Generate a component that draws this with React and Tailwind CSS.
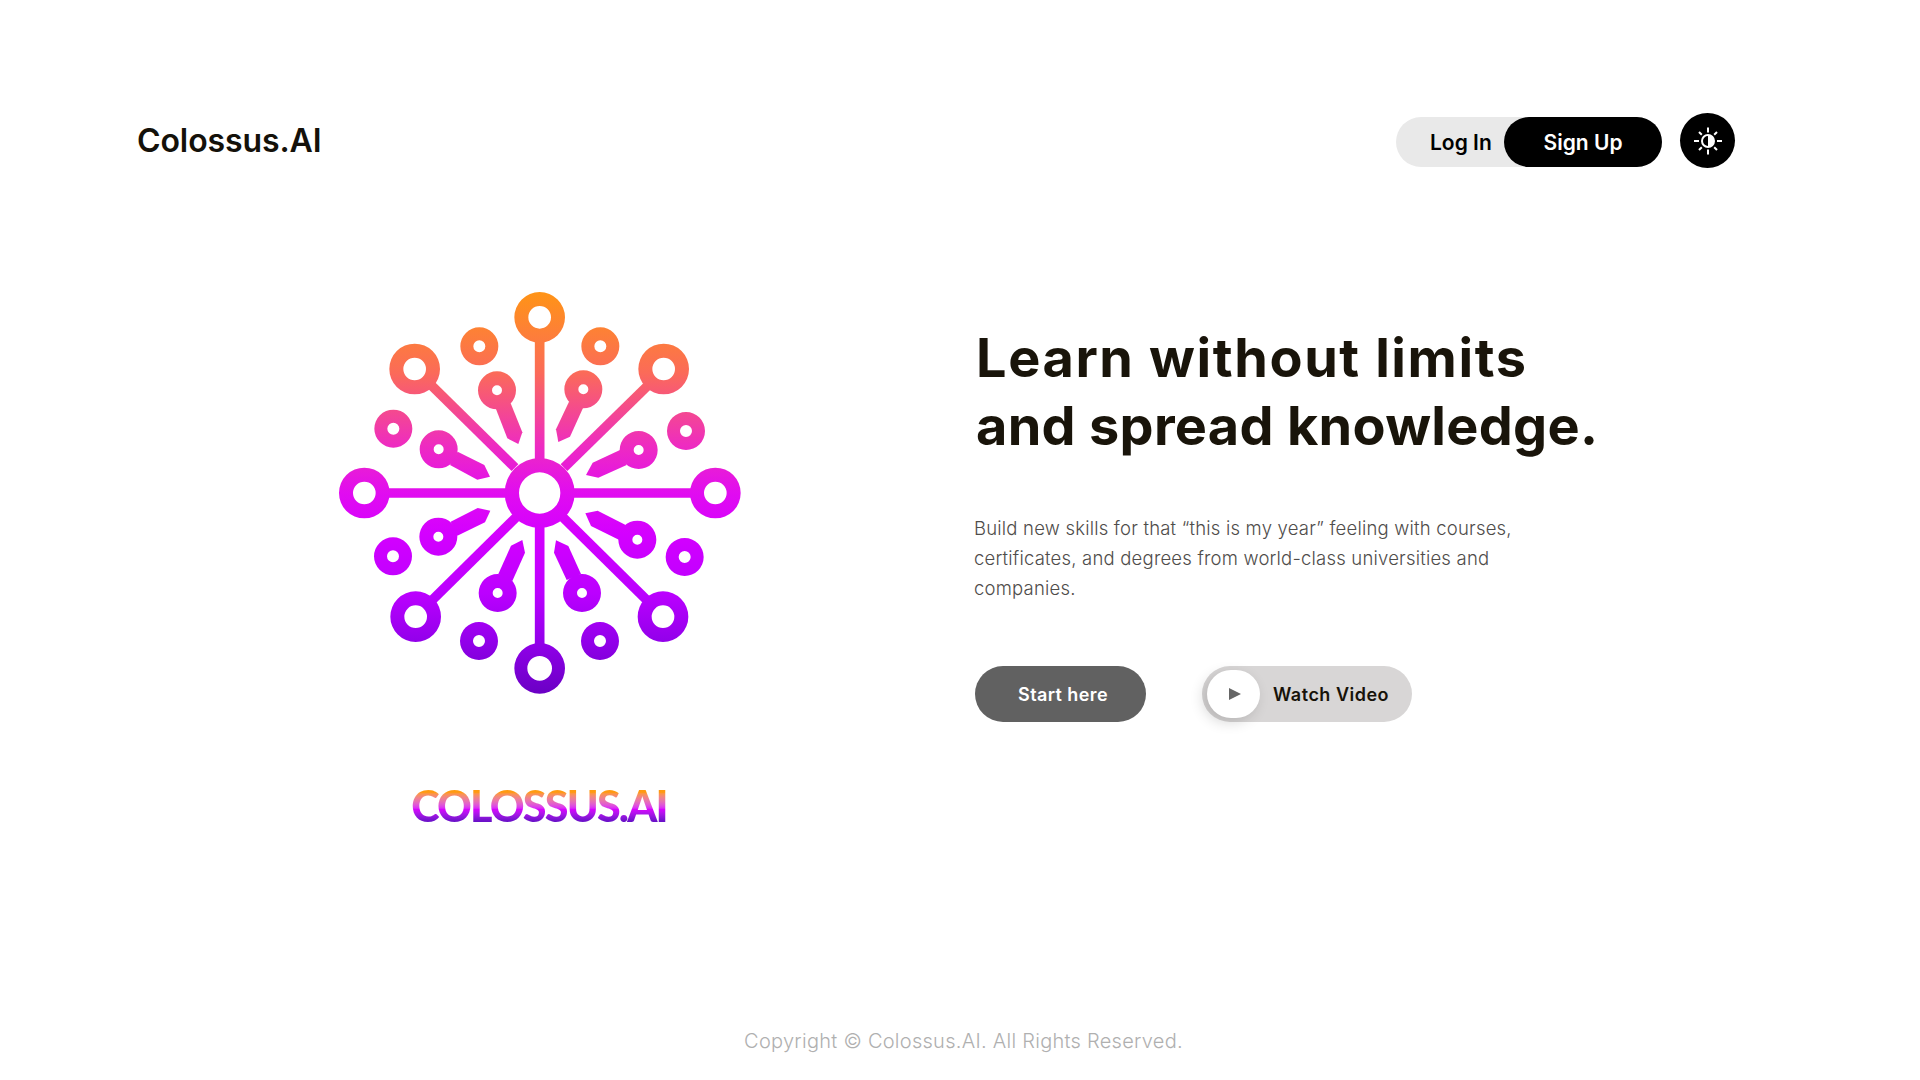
const bigRings = [
  [689, 142, 34], [689, 1195, 37], [163, 669, 34], [1216, 669, 34],
  [314, 297, 34], [1061, 297, 34], [317, 1040, 34], [1059, 1040, 34],
];

const smallRings = [
  [508, 229], [871, 229], [250, 476], [1128, 483],
  [249, 859], [1124, 861], [507, 1113], [870, 1113],
];

// head of each key plus the polygon of its tail
const keys = [
  { head: [561, 361], tail: '557,415 592,505 625,522 637,487 602,400' },
  { head: [820, 358], tail: '777,395 738,478 745,516 780,500 820,412' },
  { head: [386, 538], tail: '443,545 523,585 540,620 502,629 420,585' },
  { head: [986, 540], tail: '930,540 848,578 828,615 865,623 950,585' },
  { head: [385, 800], tail: '422,755 503,714 541,722 525,757 442,797' },
  { head: [982, 809], tail: '947,765 863,722 826,730 843,768 928,810' },
  { head: [563, 969], tail: '565,912 603,827 637,810 645,848 607,933' },
  { head: [816, 969], tail: '770,930 732,848 738,811 775,828 813,912' },
];

const spokes = [
  [689, 210, 689, 575], [689, 765, 689, 1125],
  [233, 669, 590, 669], [788, 669, 1147, 669],
  [365, 347, 615, 593], [1011, 349, 762, 593],
  [368, 989, 618, 742], [1009, 989, 759, 742],
];

// ring drawn as an even-odd path so the hole is really empty
function ring(cx, cy, outer, inner) {
  const circle = (r) => `M${cx - r} ${cy}a${r} ${r} 0 1 0 ${r * 2} 0a${r} ${r} 0 1 0 ${-r * 2} 0z`;
  return circle(outer) + circle(inner);
}

function Logo() {
  return (
    <svg viewBox="0 0 1350 1350" className="w-[450px] h-[450px] block">
      <defs>
        <linearGradient id="bloom" gradientUnits="userSpaceOnUse" x1="0" y1="66" x2="0" y2="1272">
          <stop offset="0" stopColor="#ff9416" />
          <stop offset="0.2" stopColor="#fb6b58" />
          <stop offset="0.38" stopColor="#ee2cc0" />
          <stop offset="0.5" stopColor="#e10cf0" />
          <stop offset="0.6" stopColor="#d400ff" />
          <stop offset="0.75" stopColor="#bb00ff" />
          <stop offset="0.87" stopColor="#9200ea" />
          <stop offset="1" stopColor="#6a00c4" />
        </linearGradient>
      </defs>
      {spokes.map(([x1, y1, x2, y2], i) => (
        <line key={i} x1={x1} y1={y1} x2={x2 + 0.01} y2={y2 + 0.01} stroke="url(#bloom)" strokeWidth="29" />
      ))}
      {keys.map((k, i) => (
        <polygon key={i} points={k.tail} fill="url(#bloom)" />
      ))}
      <path fillRule="evenodd" fill="url(#bloom)" d={ring(689, 669, 105, 62)} />
      {bigRings.map(([x, y, hole], i) => (
        <path key={i} fillRule="evenodd" fill="url(#bloom)" d={ring(x, y, 76, hole)} />
      ))}
      {smallRings.map(([x, y], i) => (
        <path key={i} fillRule="evenodd" fill="url(#bloom)" d={ring(x, y, 57, 18)} />
      ))}
      {keys.map((k, i) => (
        <path key={i} fillRule="evenodd" fill="url(#bloom)" d={ring(k.head[0], k.head[1], 57, 15)} />
      ))}
    </svg>
  );
}

function SunIcon() {
  return (
    <svg viewBox="0 0 30 30" className="w-[30px] h-[30px]" fill="none" stroke="#fff" strokeWidth="2">
      <circle cx="15" cy="15" r="6" />
      <path d="M15 9a6 6 0 0 1 0 12z" fill="#fff" stroke="none" />
      <path d="M15 1.5v5M15 23.5v5M1 15h5M24 15h5M6 6l2.8 2.8M21.2 21.2l2.8 2.8M6 24l2.8-2.8M21.2 8.8l2.8-2.8" />
    </svg>
  );
}

export default function App() {
  return (
    <div className="h-screen flex flex-col bg-white overflow-hidden font-['Inter',sans-serif]">
      {/* HEADER */}
      <header className="flex items-center justify-between pt-[113px] pl-[137px] pr-[185px]">
        <div className="font-semibold text-[32px] text-[#14110a] tracking-[-0.1px]">Colossus.AI</div>
        <div className="flex items-center gap-[18px]">
          <div className="flex items-center h-[50px] w-[266px] rounded-full bg-[#e9e9e9] mt-[3px]">
            <button className="w-[108px] pl-[34px] pt-[2px] text-left font-semibold text-[21px] text-black whitespace-nowrap">Log In</button>
            <button className="w-[158px] h-full pt-[2px] rounded-full bg-black text-white font-semibold text-[21px]">Sign Up</button>
          </div>
          <button className="w-[55px] h-[55px] rounded-full bg-black flex items-center justify-center">
            <SunIcon />
          </button>
        </div>
      </header>

      {/* HERO */}
      <main className="flex pl-[310px] mt-[102px]">
        <div className="flex flex-col items-center w-[450px]">
          <Logo />
          <div className="mt-[66px] ml-[8px] font-['Lato',sans-serif] font-black text-[43px] leading-[40px] tracking-[-1.8px] bg-linear-to-b from-[#ff9a10] from-16% via-[#d800ff] via-58% to-[#6a10c8] to-88% bg-clip-text text-transparent">COLOSSUS.AI</div>
        </div>
        <div className="ml-[215px] pt-[54px]">
          <h1 className="ml-[1px] font-bold text-[54px] leading-[68px] tracking-[0.3px] text-[#19140a] whitespace-nowrap">
            <span className="tracking-[1.6px]">Learn without limits</span>
            <br />
            and spread knowledge.
          </h1>
          <p className="mt-[53px] -ml-[1px] text-[18.5px] leading-[30px] tracking-[0.2px] text-[#4f4d4b] font-light whitespace-nowrap">
            Build new skills for that “this is my year” feeling with courses,
            <br />
            certificates, and degrees from world-class universities and
            <br />
            companies.
          </p>
          <div className="flex mt-[63px] gap-[56px]">
            <button className="w-[171px] h-[56px] rounded-full bg-[#616161] text-white font-semibold text-[18px] tracking-[0.4px] pl-[5px]">Start here</button>
            <button className="relative flex items-center w-[210px] h-[56px] rounded-full bg-[#d8d6d6] overflow-visible">
              <span className="ml-[5px] w-[53px] h-[48px] rounded-full bg-white flex items-center justify-center shadow-[-4px_4px_14px_rgba(0,0,0,0.16)]">
                <svg viewBox="0 0 12 12" className="w-[12px] h-[12px] ml-[2px]"><path d="M0 0l12 6-12 6z" fill="#666" /></svg>
              </span>
              <span className="ml-[13px] font-semibold text-[18px] tracking-[0.5px] text-[#17130a] whitespace-nowrap">Watch Video</span>
            </button>
          </div>
        </div>
      </main>

      {/* FOOTER */}
      <footer className="mt-auto pb-[25px] pl-[7px] text-center text-[20px] leading-[28px] tracking-[0.27px] text-[#b0b0b0] font-light">
        Copyright © Colossus.AI. All Rights Reserved.
      </footer>
    </div>
  );
}
